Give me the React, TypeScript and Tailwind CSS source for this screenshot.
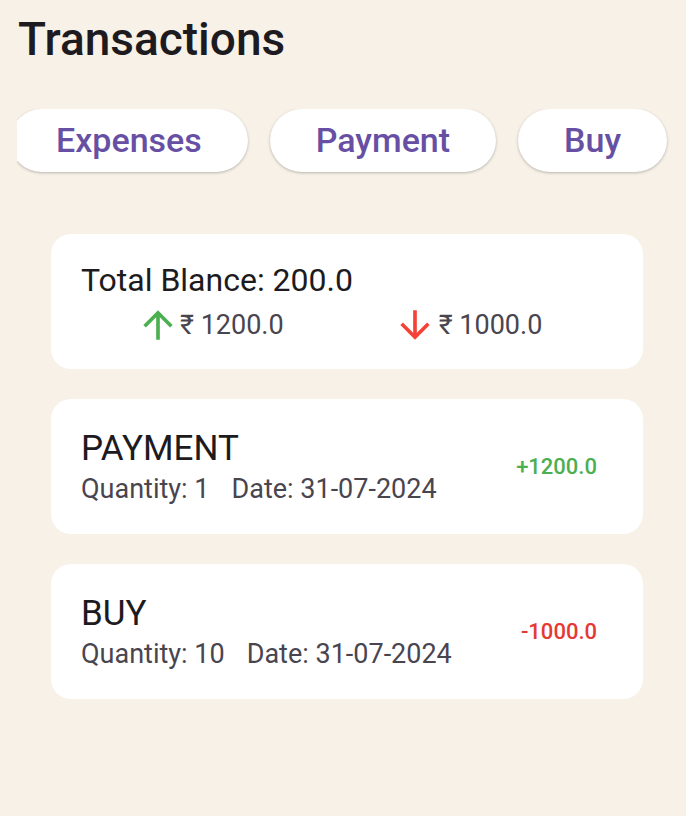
import React from "react";

function ArrowUp({ color }: { color: string }) {
  return (
    <svg width="44" height="44" viewBox="0 0 24 24" className="shrink-0">
      <path d="M4 12l1.41 1.41L11 7.83V20h2V7.83l5.58 5.59L20 12l-8-8-8 8z" fill={color} />
    </svg>
  );
}

function ArrowDown({ color }: { color: string }) {
  return (
    <svg width="44" height="44" viewBox="0 0 24 24" className="shrink-0">
      <path d="M20 12l-1.41-1.41L13 16.17V4h-2v12.17l-5.58-5.59L4 12l8 8 8-8z" fill={color} />
    </svg>
  );
}

function TxCard({ title, qty, date, amount, color }: { title: string; qty: string; date: string; amount: string; color: string }) {
  return (
    <div className="flex h-[135px] items-center justify-between rounded-[20px] bg-white pl-[30px] pr-[46px]">
      <div className="flex flex-col">
        <div className="text-[35px] leading-none text-[#1d1b20]">{title}</div>
        <div className="mt-[10px] text-[27px] leading-none text-[#49454f]">
          <span>Quantity: {qty}</span>
          <span className="ml-[22px]">Date: {date}</span>
        </div>
      </div>
      <div className={`text-[22px] font-medium leading-none ${color}`}>{amount}</div>
    </div>
  );
}

export default function App() {
  return (
    <div className="min-h-[816px] w-[686px] bg-[#f7f1e7]" style={{ fontFamily: "Roboto, 'Noto Sans', sans-serif" }}>
      <div className="pt-[16px] pl-[18px]">
        <h1 className="text-[46px] font-medium leading-none text-[#1d1b20]">Transactions</h1>
      </div>
      <div className="mt-[47px] ml-[17px] overflow-hidden pb-[4px]">
        <div className="flex gap-[22px] -ml-[7px]">
          {["Expenses", "Payment", "Buy"].map((t) => (
            <div
              key={t}
              className="flex h-[63px] shrink-0 items-center rounded-full bg-white px-[46px] text-[34px] font-medium text-[#6750a4] shadow-[0_1px_3px_rgba(0,0,0,0.25)]"
            >
              {t}
            </div>
          ))}
        </div>
      </div>
      <div className="mt-[58px] ml-[51px] flex w-[592px] flex-col gap-[30px]">
        <div className="h-[135px] rounded-[20px] bg-white pl-[30px] pt-[30px]">
          <div className="text-[32px] leading-none text-[#1d1b20]">Total Blance: 200.0</div>
          <div className="mt-[7px] flex items-center">
            <div className="ml-[55px] flex items-center">
              <ArrowUp color="#4caf50" />
              <span className="text-[27px] leading-none text-[#49454f]">₹ 1200.0</span>
            </div>
            <div className="ml-[109px] flex items-center">
              <ArrowDown color="#f44336" />
              <span className="ml-[2px] text-[27px] leading-none text-[#49454f]">₹ 1000.0</span>
            </div>
          </div>
        </div>
        <TxCard title="PAYMENT" qty="1" date="31-07-2024" amount="+1200.0" color="text-[#4caf50]" />
        <TxCard title="BUY" qty="10" date="31-07-2024" amount="-1000.0" color="text-[#e53935]" />
      </div>
    </div>
  );
}
